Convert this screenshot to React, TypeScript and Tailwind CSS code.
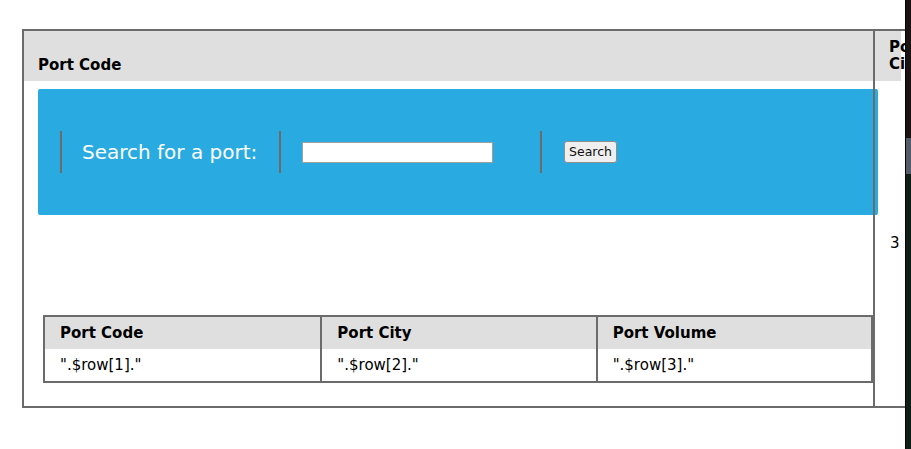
import React from 'react';

const ROWS = [['".$row[1]."', '".$row[2]."', '".$row[3]."']];

const App: React.FC = () => {
  return (
    <div className="flex h-[449px] w-[911px] overflow-hidden bg-white font-['DejaVu_Sans',sans-serif] text-[15px] text-black">
      <div className="w-[905px] shrink-0 overflow-hidden">
        <div className="ml-[22px] mt-[29px] w-[1000px] border-2 border-[#6b6b6b] grid grid-cols-[849px_1fr]">
          {/* header row */}
          <div className="flex h-[50px] items-end bg-[#dfdfdf] px-[14px] pb-[7px] font-bold leading-[17px]">
            Port Code
          </div>
          <div className="relative z-10 flex w-[28px] items-center border-l-2 border-[#6b6b6b] bg-[#dfdfdf] py-[7px] pl-[14px] font-bold leading-[17px]">
            Port City
          </div>

          {/* body row */}
          <div className="px-[14px] pt-[8px] pb-[23px]">
            <div className="flex h-[126px] w-[840px] items-center rounded-[2px] bg-[#29abe2]">
              <div className="ml-[22px] flex h-[42px] w-[219px] items-center border-l-2 border-[#6b6b6b] pl-[20px] text-[20px] text-white">
                Search for a port:
              </div>
              <div className="flex h-[42px] w-[261px] items-center border-l-2 border-[#6b6b6b] pl-[21px]">
                <input type="text" className="h-[21px] w-[191px] border border-[#a0a0a0] bg-white outline-none" />
              </div>
              <div className="flex h-[42px] items-center border-l-2 border-[#6b6b6b] pl-[22px]">
                <button className="h-[22px] rounded-[3px] border border-[#8f8f8f] bg-[#efefef] px-[4px] text-[12.5px] leading-none text-[#111]">
                  Search
                </button>
              </div>
            </div>

            <div className="ml-[5px] mt-[100px] w-[830px] border-2 border-[#6b6b6b]">
              <div className="grid h-[32px] grid-cols-3 bg-[#dfdfdf] font-bold">
                <div className="flex items-center pl-[15px]">Port Code</div>
                <div className="flex items-center border-l-2 border-[#6b6b6b] pl-[15px]">Port City</div>
                <div className="flex items-center border-l-2 border-[#6b6b6b] pl-[15px]">Port Volume</div>
              </div>
              {ROWS.map((row, i) => (
                <div key={i} className="grid h-[32px] grid-cols-3">
                  {row.map((cell, j) => (
                    <div
                      key={j}
                      className={j === 0 ? 'flex items-center pl-[15px]' : 'flex items-center border-l-2 border-[#6b6b6b] pl-[15px]'}
                    >
                      {cell}
                    </div>
                  ))}
                </div>
              ))}
            </div>
          </div>
          <div className="relative z-10 flex items-center border-l-2 border-[#6b6b6b] pl-[15px]">3</div>
        </div>
      </div>

      {/* dark edge of the next window */}
      <div className="flex w-[6px] shrink-0 flex-col border-l border-[#050505]">
        <div className="h-[138px] bg-[#1b1211]" />
        <div className="h-[36px] bg-[#545b6b]" />
        <div className="flex-1 bg-[#0f1f18]" />
      </div>
    </div>
  );
};

export default App;
